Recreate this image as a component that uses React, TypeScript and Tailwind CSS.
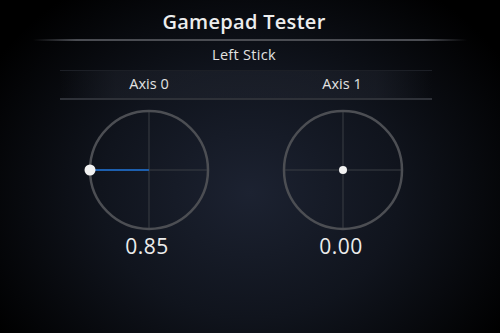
import React from "react";

function Stick({ x, y, value }: { x: number; y: number; value: string }) {
  const r = 59;
  const c = 62;
  const dx = c + x * r;
  const dy = c + y * r;
  const active = x !== 0 || y !== 0;
  return (
    <div className="flex flex-col items-center">
      <svg width="124" height="124" viewBox="0 0 124 124" className="block overflow-visible">
        <line x1={c} y1={c - r} x2={c} y2={c + r} stroke="#3b3e45" strokeWidth="1" />
        <line x1={c - r} y1={c} x2={c + r} y2={c} stroke="#3b3e45" strokeWidth="1" />
        <circle cx={c} cy={c} r={r} fill="none" stroke="#4c4e53" strokeWidth="2.5" />
        {active && (
          <line x1={dx} y1={dy} x2={c} y2={c} stroke="#1d5fae" strokeWidth="2" />
        )}
        <circle cx={dx} cy={dy} r={active ? 5.5 : 4} fill="#f2f2f2" />
      </svg>
      <div className="mt-[2px] mr-[4px] text-[21px] leading-[24px] text-[#ececec] tracking-wide">{value}</div>
    </div>
  );
}

export default function App() {
  return (
    <div
      className="w-[500px] h-[333px] overflow-hidden bg-[radial-gradient(ellipse_60%_75%_at_50%_58%,#1c2231_0%,#10141d_50%,#000000_100%)] text-[#e6e6e6]"
      style={{ fontFamily: '"Open Sans", "Liberation Sans", sans-serif' }}
    >
      <div className="h-[39px] flex items-center justify-center pt-[5px] pr-[12px]">
        <span className="text-[20px] font-semibold leading-none text-[#ededed] tracking-[0.3px]">Gamepad Tester</span>
      </div>
      <div className="mx-[33px] h-[2px] bg-[linear-gradient(90deg,rgba(80,82,88,0)_0%,#4a4c52_10%,#4a4c52_90%,rgba(80,82,88,0)_100%)]" />
      <div className="h-[29px] flex items-center justify-center pr-[12px]">
        <span className="text-[14.5px] leading-none text-[#e2e2e2] tracking-[0.3px]">Left Stick</span>
      </div>
      <div className="ml-[60px] w-[372px] h-[30px] border-b-2 border-[#2e3138] bg-[linear-gradient(90deg,rgba(40,44,55,0)_0%,rgba(40,44,55,0.35)_15%,rgba(40,44,55,0.35)_85%,rgba(40,44,55,0)_100%)] border-t border-t-[#1c1f26] flex">
        <div className="w-[176px] flex items-center justify-center">
          <span className="text-[14.5px] leading-none text-[#e2e2e2] mr-[-2px]">Axis 0</span>
        </div>
        <div className="flex-1 flex items-center justify-center">
          <span className="text-[14.5px] leading-none text-[#e2e2e2] mr-[-16px]">Axis 1</span>
        </div>
      </div>
      <div className="ml-[25px] w-[440px] flex justify-between pt-[8px] pl-[62px] pr-[60px]">
        <Stick x={-1} y={0} value="0.85" />
        <Stick x={0} y={0} value="0.00" />
      </div>
    </div>
  );
}
